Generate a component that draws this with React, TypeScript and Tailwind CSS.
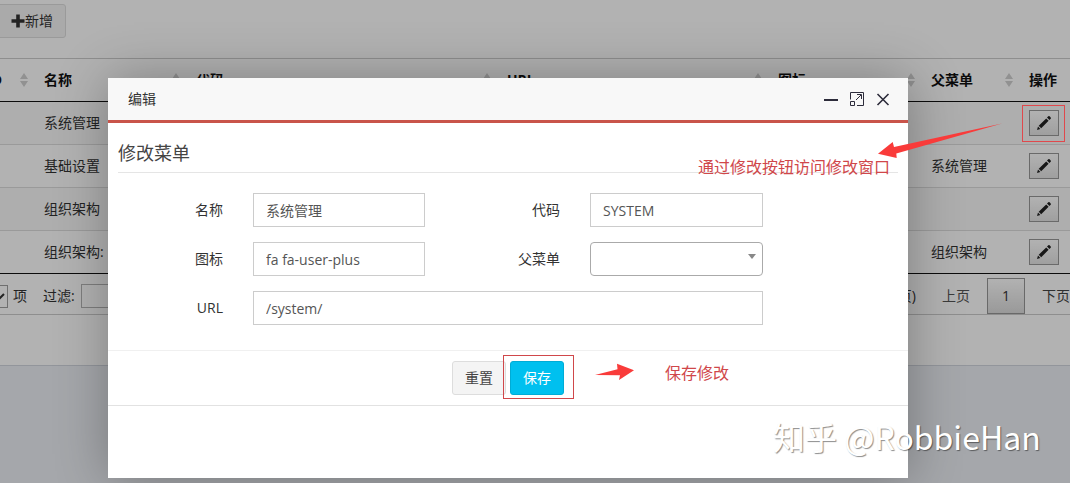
import React from "react";

type Row = { id: number; name: string; parent: string };

const rows: Row[] = [
  { id: 1, name: "系统管理", parent: "" },
  { id: 2, name: "基础设置", parent: "系统管理" },
  { id: 3, name: "组织架构", parent: "" },
  { id: 4, name: "组织架构:", parent: "组织架构" },
];

const columns = ["ID", "名称", "代码", "URL", "图标", "父菜单"];

function SortIcon() {
  return (
    <svg className="h-3.5 w-2 shrink-0" viewBox="0 0 8 14" fill="#d0d0d0" aria-hidden="true">
      <path d="M4 0 8 6H0zM4 14 0 8h8z" />
    </svg>
  );
}

function PencilIcon() {
  return (
    <svg className="h-4 w-4" viewBox="0 0 16 16" fill="#222" aria-hidden="true">
      <path d="M1 15 2 11.6 4.4 14zM2.7 10.8 10.2 3.4 12.6 5.8 5.2 13.3zM11 2.6 12.3 1.3Q13 .8 13.6 1.3L14.7 2.4Q15.2 3 14.7 3.7L13.4 5z" />
    </svg>
  );
}

function Background() {
  return (
    <div className="bg-white border-b border-[#d2d6de]">
      <div className="h-[58px] pt-1">
        <button
          type="button"
          className="-ml-1 flex h-[34px] items-center rounded-[3px] border border-[#ddd] bg-[#f4f4f4] pr-3 pl-3.5 text-[#333]"
        >
          <svg className="h-3.5 w-3.5" viewBox="0 0 14 14" fill="#333" aria-hidden="true">
            <path d="M5.2.5h3.6v4.7h4.7v3.6H8.8v4.7H5.2V8.8H.5V5.2h4.7z" />
          </svg>
          <span>新增</span>
        </button>
      </div>

      <table className="w-full table-fixed border-separate border-spacing-0 border-t border-[#ccc] whitespace-nowrap">
        <colgroup>
          <col className="w-[34px]" />
          <col className="w-[152px]" />
          <col className="w-[311px]" />
          <col className="w-[271px]" />
          <col className="w-[153px]" />
          <col className="w-[98px]" />
          <col />
        </colgroup>
        <thead>
          <tr className="h-[43px] text-left text-[#111]">
            {columns.map((c, i) => (
              <th key={c} className="border-b border-[#111] p-0 font-bold">
                <div className={i === 0 ? "flex items-center justify-end gap-[18px] pr-1.5" : "flex items-center justify-between pr-1.5 pl-2.5"}>
                  <span>{c}</span>
                  <SortIcon />
                </div>
              </th>
            ))}
            <th className="border-b border-[#111] p-0 pl-2.5 font-bold">操作</th>
          </tr>
        </thead>
        <tbody>
          {rows.map((r, i) => {
            const line = i === rows.length - 1 ? "border-b border-[#111] p-0" : "border-b border-[#ddd] p-0";
            return (
              <tr key={r.id} className={i % 2 === 0 ? "h-[43px] bg-[#f9f9f9]" : "h-[43px] bg-white"}>
                <td className={line} />
                <td className={line}><span className="pl-2.5">{r.name}</span></td>
                <td className={line} />
                <td className={line} />
                <td className={line} />
                <td className={line}><span className="pl-2.5">{r.parent}</span></td>
                <td className={line}>
                  <button
                    type="button"
                    aria-label="修改"
                    className="ml-2.5 flex h-[26px] w-[30px] items-center justify-center border border-[#999] bg-linear-to-b from-white to-[#e4e4e4]"
                  >
                    <PencilIcon />
                  </button>
                </td>
              </tr>
            );
          })}
        </tbody>
      </table>

      <div className="flex h-[41px] items-center justify-between overflow-hidden border-b border-[#ccc] pt-1">
        <div className="flex items-center">
          <select aria-label="每页项数" className="-ml-8 h-[23px] w-10 border border-[#a0a0a0] bg-white">
            <option />
          </select>
          <span className="ml-[5px]">项</span>
          <label htmlFor="filter" className="ml-4">过滤:</label>
          <input id="filter" className="ml-1.5 h-[24px] w-40 border border-[#b5b5b5] bg-white" />
        </div>
        <div className="-mr-[17px] flex items-center text-[#333]">
          <span className="mr-[26px]">(共1页)</span>
          <button type="button" className="mr-[17px] text-[#555]">上页</button>
          <button
            type="button"
            className="h-9 w-[38px] border border-[#979797] bg-linear-to-b from-white to-[#dcdcdc]"
          >
            1
          </button>
          <button type="button" className="px-[17px] text-[#444]">下页</button>
        </div>
      </div>
      <div className="h-[50px]" />
    </div>
  );
}

const labelClass = "text-right text-[#333]";
const inputClass = "h-[34px] w-full min-w-0 border border-[#ccc] bg-white px-3 text-[#555] outline-none";

function EditDialog() {
  return (
    <section
      role="dialog"
      aria-label="编辑"
      className="min-h-[400px] w-[800px] bg-white shadow-[1px_1px_50px_rgba(0,0,0,0.3)]"
    >
      <header className="flex h-[45px] items-center justify-between border-b-3 border-[#c9544a] bg-[#f8f8f8] pr-[18px] pl-5">
        <h2 className="text-[#333]">编辑</h2>
        <div className="flex items-center gap-3 text-[#2d2c3b]">
          <button type="button" aria-label="最小化">
            <svg className="h-3.5 w-3.5" viewBox="0 0 14 14" aria-hidden="true">
              <path d="M0 8h14" stroke="currentColor" strokeWidth="2" />
            </svg>
          </button>
          <button type="button" aria-label="最大化">
            <svg className="h-3.5 w-3.5" viewBox="0 0 14 14" fill="none" stroke="currentColor" aria-hidden="true">
              <path d="M.5 7.5V.5h13v13H7M.5 9.5h4v4h-4zM6 8 11 3M7 2.5h4.5V7" />
            </svg>
          </button>
          <button type="button" aria-label="关闭">
            <svg className="h-3.5 w-3.5" viewBox="0 0 14 14" fill="none" stroke="currentColor" strokeWidth="1.6" aria-hidden="true">
              <path d="M1.5 2 12.5 13M12.5 2 1.5 13" />
            </svg>
          </button>
        </div>
      </header>

      <form onSubmit={(e) => e.preventDefault()}>
        <div className="px-2.5">
          <h3 className="border-b border-[#e5e5e5] pt-4 pb-[5px] text-[18px] leading-7 text-[#444]">修改菜单</h3>
          <div className="mt-5 mb-[25px] grid grid-cols-[105px_172px_105px_173px] items-center gap-x-[30px] gap-y-[15px]">
            <label htmlFor="name" className={labelClass}>名称</label>
            <input id="name" defaultValue="系统管理" className={inputClass} />
            <label htmlFor="code" className={labelClass}>代码</label>
            <input id="code" defaultValue="SYSTEM" className={inputClass} />
            <label htmlFor="icon" className={labelClass}>图标</label>
            <input id="icon" defaultValue="fa fa-user-plus" className={inputClass} />
            <label htmlFor="parent" className={labelClass}>父菜单</label>
            <div className="relative">
              <select id="parent" className="block h-[34px] w-full appearance-none rounded-[4px] border border-[#aaa] bg-white">
                <option />
              </select>
              <svg className="pointer-events-none absolute top-3 right-[7px] h-[5px] w-2" viewBox="0 0 8 5" fill="#888" aria-hidden="true">
                <path d="M0 0h8L4 5z" />
              </svg>
            </div>
            <label htmlFor="url" className={labelClass}>URL</label>
            <div className="col-span-3">
              <input id="url" defaultValue="/system/" className={inputClass} />
            </div>
          </div>
        </div>
        <div className="flex justify-center gap-1 border-t border-b border-t-[#f0f0f0] border-b-[#e2e2e2] py-2.5">
          <button type="reset" className="h-[34px] rounded-[3px] border border-[#ddd] bg-[#f4f4f4] px-3 text-[#444]">重置</button>
          <button type="submit" className="h-[34px] rounded-[3px] border border-[#00acd6] bg-[#00c0ef] px-3 text-white">保存</button>
        </div>
      </form>
    </section>
  );
}

function Annotations() {
  return (
    <div className="pointer-events-none absolute inset-0 text-[16px] leading-5 text-[#d0474a]">
      <div className="absolute top-[105px] left-[1022px] h-[37px] w-[43px] border border-[#e0484c]" />
      <div className="absolute top-[355px] left-[503px] h-11 w-[71px] border border-[#d0474a]" />
      <svg className="absolute top-[120px] left-[876px] h-10 w-32" viewBox="876 120 128 40" fill="#f93b3a" aria-hidden="true">
        <path d="M1002 123.5 894 147 892.7 142 878 153.8 896.7 158 896.3 153.5z" />
      </svg>
      <svg className="absolute top-[360px] left-[594px] h-6 w-11" viewBox="594 360 44 24" fill="#f93b3a" aria-hidden="true">
        <path d="M595 375 617.5 369.3 617 363.7 634 370.3 619 380 620 375.3z" />
      </svg>
      <p className="absolute top-[157px] left-[698px] whitespace-nowrap">通过修改按钮访问修改窗口</p>
      <p className="absolute top-[363px] left-[665px] whitespace-nowrap">保存修改</p>
      <p className="absolute top-[416px] left-[773px] font-['Noto_Sans_CJK_SC',sans-serif] text-[32px] leading-10 whitespace-nowrap text-white [text-shadow:1px_1px_1px_rgba(0,0,0,0.45)]">
        知乎 @RobbieHan
      </p>
    </div>
  );
}

export default function App() {
  return (
    <main className="relative min-h-screen overflow-hidden bg-[#ecf0f5] font-['Open_Sans','Noto_Sans_CJK_SC',sans-serif] text-[14px] leading-5 text-[#333]">
      <Background />
      <div className="absolute inset-0 flex items-start justify-center bg-black/30 pt-[78px] pr-[54px]">
        <EditDialog />
      </div>
      <Annotations />
    </main>
  );
}
